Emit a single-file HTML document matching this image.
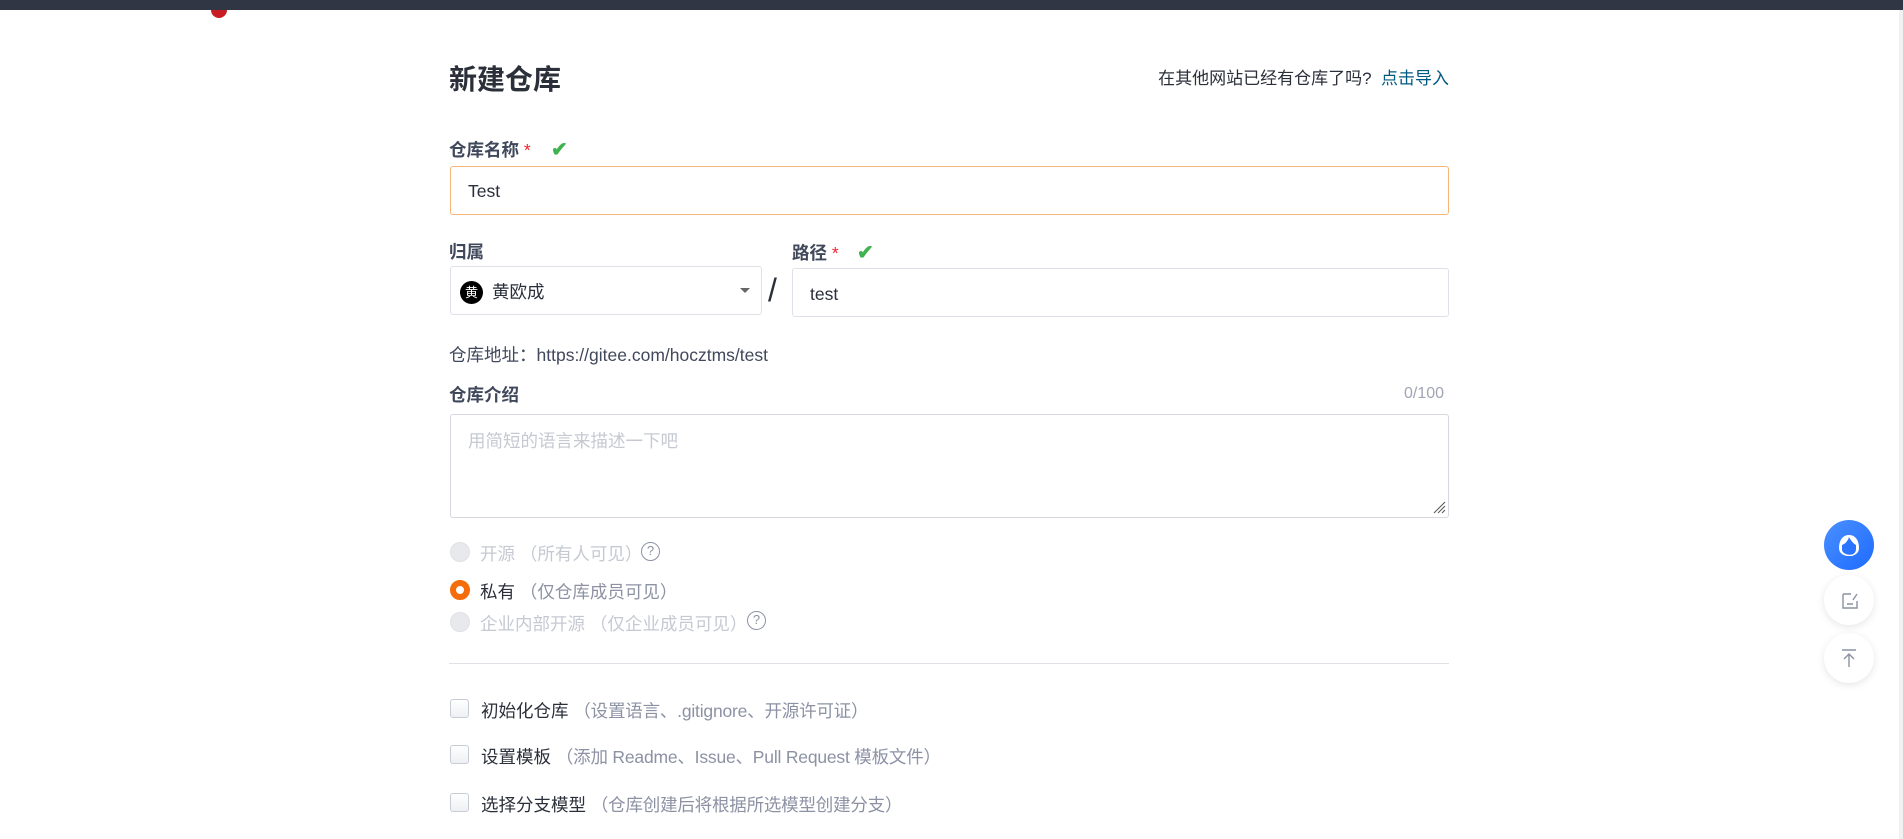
<!DOCTYPE html>
<html><head><meta charset="utf-8"><style>
*{box-sizing:border-box;margin:0;padding:0}
body{width:1903px;height:839px;overflow:hidden;background:#fff;font-family:"Liberation Sans","Noto Sans CJK SC",sans-serif;color:#40485b;position:relative;font-size:17.5px}
.a{position:absolute;white-space:nowrap}
.topbar{left:0;top:0;width:1903px;height:10px;background:#303643}
.lbl{font-weight:bold;color:#40485b;font-size:17.5px}
.star{color:#f5222d;font-weight:normal}
.chk{color:#3fb34f;font-size:20px;font-weight:bold}
.box{border:1px solid #dfe1e8;border-radius:3px;background:#fff}
.gray{color:#8c92a4}
.dis{color:#c6c9d2}
.radio{width:20px;height:20px;border-radius:50%;background:#e8e9ec;border:1px solid #e0e1e5}
.cb{width:19px;height:19px;border:1px solid #c8ccd5;border-radius:3px;background:linear-gradient(#fff,#eef0f3)}
.fb{width:50px;height:50px;border-radius:50%;background:#fff;box-shadow:0 2px 8px rgba(0,0,0,.1)}
</style></head><body>
<div class="a topbar"></div>
<div class="a" style="left:211px;top:2px;width:16px;height:16px;border-radius:50%;background:#c71d23;clip-path:inset(8px 0 0 0)"></div>
<div class="a" style="left:1899px;top:10px;width:4px;height:829px;background:#f1f1f1"></div>

<div class="a" style="left:449px;top:58px;font-size:28px;font-weight:bold;color:#2b2f3a">新建仓库</div>
<div class="a" style="right:454px;top:64px;font-size:17px;color:#2b2f3a">在其他网站已经有仓库了吗?&nbsp; <span style="color:#005980">点击导入</span></div>

<div class="a lbl" style="left:449px;top:137px">仓库名称 <span class="star">*</span></div>
<div class="a chk" style="left:551px;top:137px">✔</div>
<div class="a box" style="left:450px;top:166px;width:999px;height:49px;border-color:#f8b57a"></div>
<div class="a" style="left:468px;top:181px;color:#2b2f3a">Test</div>

<div class="a lbl" style="left:449px;top:239px">归属</div>
<div class="a lbl" style="left:792px;top:240px">路径 <span class="star">*</span></div>
<div class="a chk" style="left:857px;top:240px">✔</div>
<div class="a box" style="left:450px;top:266px;width:312px;height:49px"></div>
<div class="a" style="left:460px;top:281px;width:23px;height:23px;border-radius:50%;background:#000;color:#fff;font-size:13px;line-height:23px;text-align:center">黄</div>
<div class="a" style="left:492px;top:279px;color:#2b2f3a">黄欧成</div>
<div class="a" style="left:740px;top:288px;width:0;height:0;border-left:5px solid transparent;border-right:5px solid transparent;border-top:5px solid #666"></div>
<div class="a" style="left:768px;top:272px;font-size:32px;color:#2b2f3a">/</div>
<div class="a box" style="left:792px;top:268px;width:657px;height:49px"></div>
<div class="a" style="left:810px;top:284px;color:#2b2f3a">test</div>

<div class="a" style="left:449px;top:342px;color:#40485b">仓库地址：https://gitee.com/hocztms/test</div>
<div class="a lbl" style="left:449px;top:382px">仓库介绍</div>
<div class="a gray" style="left:1404px;top:385px;font-size:16px;color:#a0a5b3">0/100</div>
<div class="a box" style="left:450px;top:414px;width:999px;height:104px;border-color:#d5d8de"></div>
<div class="a" style="left:468px;top:428px;color:#c6c9d2">用简短的语言来描述一下吧</div>
<svg class="a" style="left:1432px;top:500px" width="14" height="14"><path d="M2 13L13 2M6 13L13 6M10 13L13 10" stroke="#555" stroke-width="1"/></svg>

<div class="a radio" style="left:450px;top:542px"></div>
<div class="a dis" style="left:480px;top:541px">开源 （所有人可见）</div>
<div class="a" style="left:641px;top:542px;width:19px;height:19px;border:1.5px solid #8c92a4;border-radius:50%;font-size:13px;line-height:16px;text-align:center;color:#8c92a4">?</div>
<div class="a" style="left:450px;top:580px;width:20px;height:20px;border-radius:50%;border:6px solid #f56c0a;background:#fff"></div>
<div class="a" style="left:480px;top:579px;color:#2b2f3a">私有 <span class="gray">（仅仓库成员可见）</span></div>
<div class="a radio" style="left:450px;top:612px"></div>
<div class="a dis" style="left:480px;top:611px">企业内部开源 （仅企业成员可见）</div>
<div class="a" style="left:747px;top:611px;width:19px;height:19px;border:1.5px solid #8c92a4;border-radius:50%;font-size:13px;line-height:16px;text-align:center;color:#8c92a4">?</div>

<div class="a" style="left:449px;top:663px;width:1000px;height:1px;background:#dfe1e6"></div>

<div class="a cb" style="left:450px;top:699px"></div>
<div class="a" style="left:481px;top:698px;color:#2b2f3a">初始化仓库 <span class="gray" style="letter-spacing:-0.2px">（设置语言、.gitignore、开源许可证）</span></div>
<div class="a cb" style="left:450px;top:745px"></div>
<div class="a" style="left:481px;top:744px;color:#2b2f3a">设置模板 <span class="gray" style="letter-spacing:-0.2px">（添加 Readme、Issue、Pull Request 模板文件）</span></div>
<div class="a cb" style="left:450px;top:793px"></div>
<div class="a" style="left:481px;top:792px;color:#2b2f3a">选择分支模型 <span class="gray" style="letter-spacing:-0.2px">（仓库创建后将根据所选模型创建分支）</span></div>

<div class="a" style="left:1824px;top:520px;width:50px;height:50px;border-radius:50%;background:linear-gradient(135deg,#4a90ff,#1e6bff)">
<svg width="50" height="50"><path d="M15 28c0-8 4-13 10-13s10 5 10 13c0 5-4 8-10 8s-10-3-10-8z" fill="#fff"/><path d="M18 25c3-1 6-4 7-8 2 4 5 7 7 8v4c0 4-3 6-7 6s-7-2-7-6z" fill="#2a74ff"/><path d="M18 32c3 3 7 4 11 3" stroke="#fff" fill="none" stroke-width="1.2"/></svg></div>
<div class="a fb" style="left:1824px;top:575px"><svg width="50" height="50"><path d="M19 19h8M19 19v14h14v-7M23 29h6M29 25l4-6" stroke="#8c92a4" fill="none" stroke-width="1.4"/></svg></div>
<div class="a fb" style="left:1824px;top:633px"><svg width="50" height="50"><path d="M18 17h14M25 21v13M20 26l5-5 5 5" stroke="#8c92a4" fill="none" stroke-width="1.4"/></svg></div>
</body></html>
